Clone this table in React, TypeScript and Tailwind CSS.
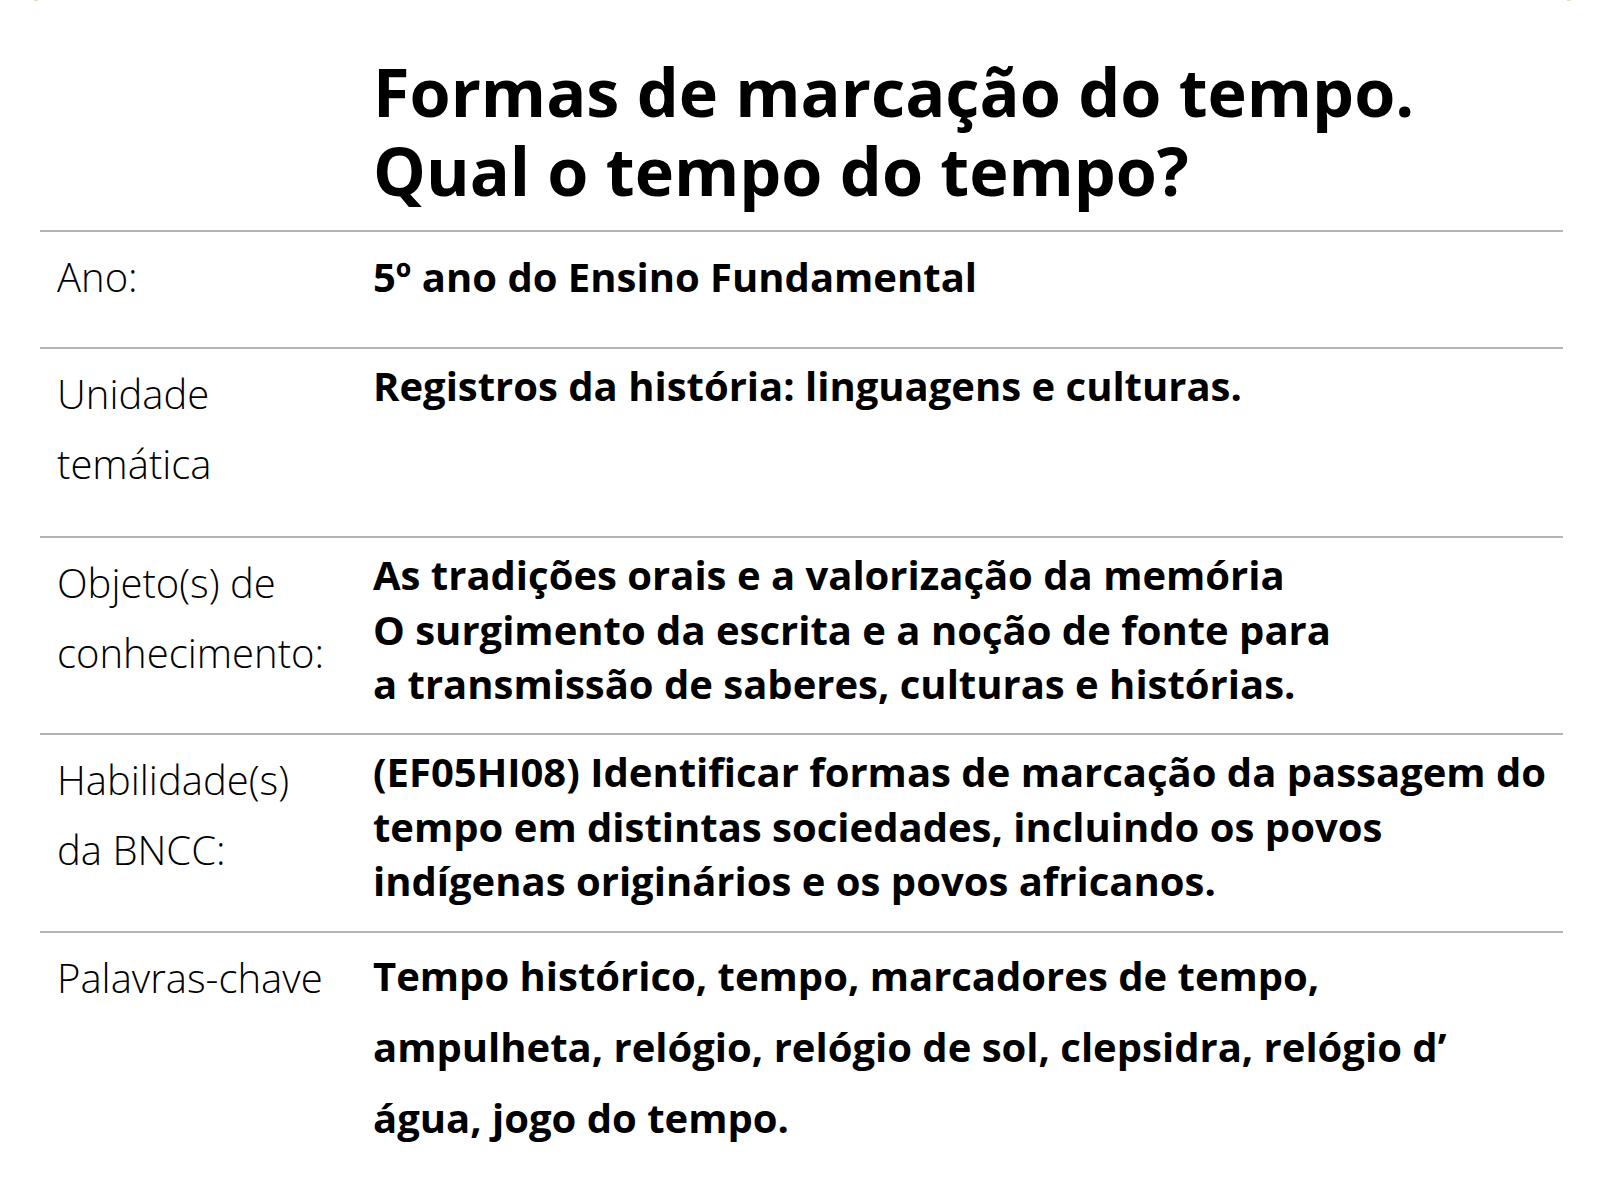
const rows: { label: string[]; value: string[]; h: string; v: string }[] = [
  { label: ["Ano:"], value: ["5º ano do Ensino Fundamental"], h: "h-[117px]", v: "pt-[10px] leading-[70px]" },
  {
    label: ["Unidade", "temática"],
    value: ["Registros da história: linguagens e culturas."],
    h: "h-[189px]",
    v: "pt-[10px] leading-[54.5px]",
  },
  {
    label: ["Objeto(s) de", "conhecimento:"],
    value: [
      "As tradições orais e a valorização da memória",
      "O surgimento da escrita e a noção de fonte para",
      "a transmissão de saberes, culturas e histórias.",
    ],
    h: "h-[197px]",
    v: "pt-[10px] leading-[54.5px]",
  },
  {
    label: ["Habilidade(s)", "da BNCC:"],
    value: [
      "(EF05HI08) Identificar formas de marcação da passagem do",
      "tempo em distintas sociedades, incluindo os povos",
      "indígenas originários e os povos africanos.",
    ],
    h: "h-[198px]",
    v: "pt-[10px] leading-[54.5px]",
  },
  {
    label: ["Palavras-chave"],
    value: [
      "Tempo histórico, tempo, marcadores de tempo,",
      "ampulheta, relógio, relógio de sol, clepsidra, relógio d’",
      "água, jogo do tempo.",
    ],
    h: "h-[269px]",
    v: "pt-[7px] leading-[71px]",
  },
]

export default function App() {
  return (
    <div className="w-[1600px] h-[1200px] bg-white overflow-hidden font-['Open_Sans',sans-serif] text-black">
      {/* bottom corners of the frame above, barely in view */}
      <div className="flex justify-between h-[1px] ml-[34px] w-[1537px]">
        <span className="w-[4px] bg-[#cdeac0]" />
        <span className="w-[4px] bg-[#cdeac0]" />
      </div>
      <div className="ml-[40px] w-[1523px]">
        <h1 className="pl-[333px] pt-[51px] pb-[20px] text-[66.5px] leading-[79px] font-bold">
          Formas de marcação do tempo.
          <br />
          Qual o tempo do tempo?
        </h1>
        {rows.map((r, i) => (
          <div key={i} className={`grid grid-cols-[333px_1fr] border-t-2 border-[#b4b4b4] ${r.h}`}>
            <div className="pl-[17px] pt-[10px] text-[40px] leading-[70px] font-light">
              {r.label.map((l, j) => (
                <div key={j}>{l}</div>
              ))}
            </div>
            <div className={`text-[40px] font-bold ${r.v}`}>
              {r.value.map((v, j) => (
                <div key={j}>{v}</div>
              ))}
            </div>
          </div>
        ))}
      </div>
    </div>
  )
}
